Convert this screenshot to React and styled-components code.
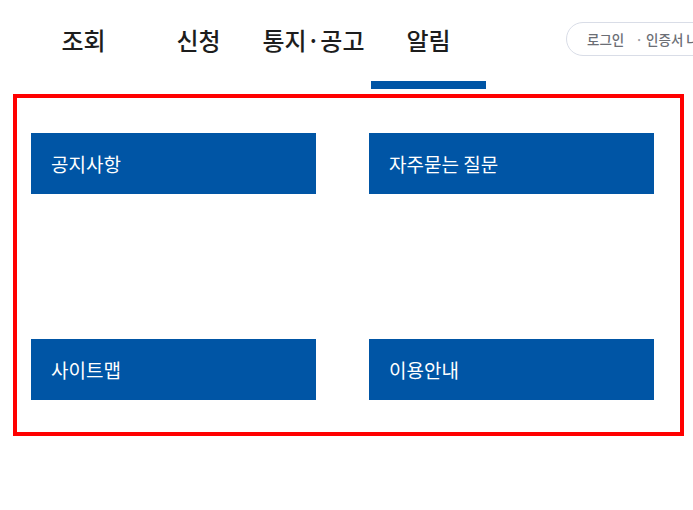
import React from "react";
import styled, { createGlobalStyle } from "styled-components";

const GlobalStyle = createGlobalStyle`
  html, body {
    margin: 0;
    padding: 0;
    background: #ffffff;
    overflow: hidden;
  }
  body {
    font-family: "Noto Sans CJK KR", "Noto Sans", sans-serif;
  }
`;

///////////////////////////////Header
const Header = styled.div`
  display: flex;
  align-items: flex-start;
  height: 94px;
  padding-left: 26px;
  white-space: nowrap;
  overflow: hidden;
`;
const Nav = styled.nav`
  display: flex;
  flex-shrink: 0;
`;
const Tab = styled.a`
  display: block;
  box-sizing: border-box;
  width: 115px;
  height: 89px;
  padding-top: 23px;
  text-align: center;
  font-size: 24px;
  line-height: 34px;
  font-weight: 500;
  color: #1d1d1d;
  border-bottom: 8px solid ${(p) => (p.$active ? "#0055a5" : "transparent")};
`;
const LoginPill = styled.div`
  flex-shrink: 0;
  display: flex;
  align-items: center;
  gap: 9px;
  box-sizing: border-box;
  height: 34px;
  margin-top: 22px;
  margin-left: 80px;
  padding: 0 20px;
  border: 1px solid #d9dde7;
  border-radius: 17px;
  font-size: 13.5px;
  font-weight: 500;
  color: #6b6e75;
`;
const Dot = styled.span`
  color: #9a9da4;
  margin-left: 2px;
`;
///////////////////////////////Header

//////////////////////////////menu box
const MenuBox = styled.div`
  box-sizing: border-box;
  width: 671px;
  height: 342px;
  margin-left: 13px;
  border: 4px solid #ff0000;
  padding: 35px 26px 0 14px;
  display: grid;
  grid-template-columns: 285px 285px;
  grid-template-rows: 61px 61px;
  column-gap: 53px;
  row-gap: 145px;
  align-content: start;
`;
const MenuButton = styled.a`
  display: flex;
  align-items: center;
  padding-left: 20px;
  background-color: #0055a5;
  color: #ffffff;
  font-size: 19px;
  font-weight: 400;
  text-decoration: none;
`;
//////////////////////////////menu box

const tabs = ["조회", "신청", "통지·공고", "알림"];
const menus = ["공지사항", "자주묻는 질문", "사이트맵", "이용안내"];

export default function App() {
  return (
    <>
      <GlobalStyle />
      <Header>
        <Nav>
          {tabs.map((t) => (
            <Tab key={t} $active={t === "알림"}>
              {t}
            </Tab>
          ))}
        </Nav>
        <LoginPill>
          <span>로그인</span>
          <span>
            <Dot>·</Dot> 인증서 나의 민원
          </span>
        </LoginPill>
      </Header>

      <MenuBox>
        {menus.map((m) => (
          <MenuButton key={m}>{m}</MenuButton>
        ))}
      </MenuBox>
    </>
  );
}
